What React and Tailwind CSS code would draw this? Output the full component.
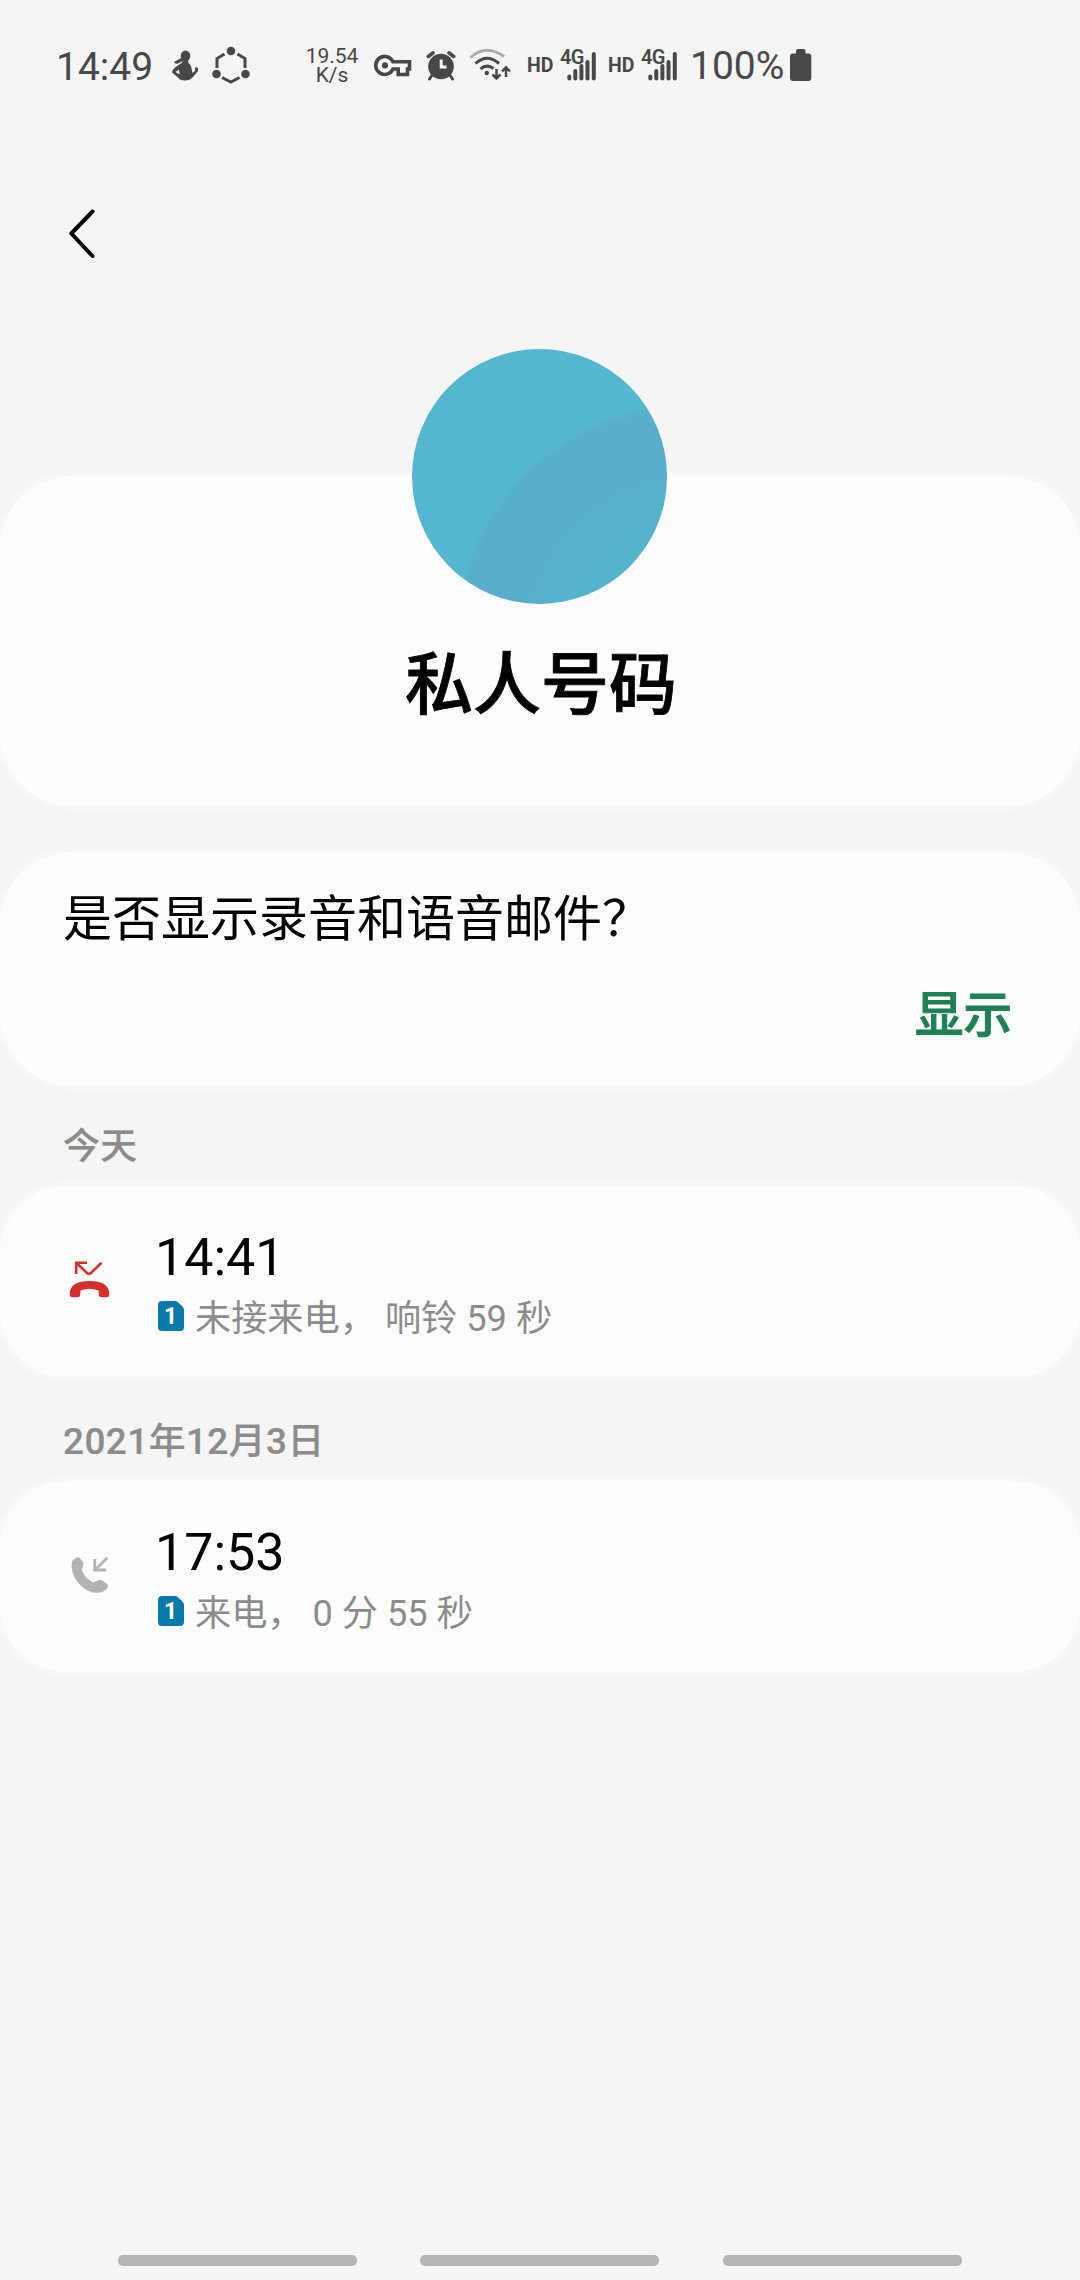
function StatusText({ className, children }) {
  return (
    <span className={`block shrink-0 whitespace-nowrap text-[39px] leading-10 ${className}`}>{children}</span>
  )
}

function FigureIcon() {
  return (
    <svg className="ml-[15px] h-10 w-7 shrink-0" viewBox="0 0 28 40" fill="#484848">
      <ellipse cx="14.5" cy="11" rx="4.8" ry="5.4" />
      <path d="M10 13 L12 16 L7 18.5 Q4 19.5 3 17 Z" />
      <path d="M11.5 14 H17 L17.5 18 Q20.5 20 20.8 25 L21.5 28 L24.3 25.5 L23.8 22.8 Q26 21.5 27 23.5 V26 L22 32 Q19 35.5 14 35.5 Q9 35.5 7.5 33 L1 27.5 Q1 25 4 22.5 L9 19 Q12 18 11.5 14 Z" />
      <path d="M4.5 27 L8 24.5 L8.5 29.5 Z" fill="#f5f5f5" />
    </svg>
  )
}

function HexagonIcon() {
  return (
    <svg className="ml-[12px] h-10 w-10 shrink-0" viewBox="0 0 40 40" fill="none" stroke="#484848" strokeWidth="3">
      <path d="M13.5 9 L6 13.5 V23 M26.5 9 L34 13.5 V23 M11 32.5 L20 37 L28.5 32.5" />
      <g fill="#484848" stroke="none">
        <circle cx="20" cy="6" r="4.3" />
        <circle cx="5.5" cy="29" r="4.3" />
        <circle cx="34.5" cy="29" r="4.3" />
      </g>
    </svg>
  )
}

function KeyIcon() {
  return (
    <svg className="ml-[14px] h-10 w-10 shrink-0" viewBox="0 0 40 40" fill="none" stroke="#484848" strokeWidth="3.6">
      <path d="M19 16.8 A9 9 0 1 0 19 24 H24.2 V29.5 H33.5 V24 H35.5 V16.8 Z" />
      <circle cx="11" cy="20.3" r="3.1" fill="#484848" stroke="none" />
    </svg>
  )
}

function AlarmIcon() {
  return (
    <svg className="ml-[12px] h-10 w-[30px] shrink-0" viewBox="0 0 30 40" fill="none" stroke="#484848" strokeLinecap="round">
      <circle cx="15" cy="21.5" r="12.8" fill="#484848" stroke="none" />
      <path d="M2.3 11.5 L7 7.8 M27.7 11.5 L23 7.8" strokeWidth="3.6" />
      <path d="M5.5 31 L3.5 34 M24.5 31 L26.5 34" strokeWidth="3" />
      <path d="M15.2 14.5 V22 H20.5" stroke="#f5f5f5" strokeWidth="3" strokeLinecap="butt" />
    </svg>
  )
}

function WifiIcon() {
  return (
    <svg className="ml-[13px] h-10 w-[42px] shrink-0" viewBox="0 0 42 40" fill="none" stroke="#484848" strokeWidth="3">
      <path d="M1.5 12.5 Q17 -1.5 35 11.5" stroke="#ababab" />
      <path d="M6.5 18.5 Q18 8 30 18.5 M11.5 24 Q18 18.5 24.5 23.5" />
      <circle cx="17.8" cy="28" r="2.2" fill="#484848" stroke="none" />
      <path d="M27.5 24 V33 M23.5 29.5 L27.5 33.5 L31.5 29.5 M37 32 V23 M33 26.5 L37 22.3 L41 26.5" strokeWidth="2.5" />
    </svg>
  )
}

function Signal({ className }) {
  return (
    <div className={`flex shrink-0 ${className}`}>
      <span className="w-[33px] pt-px text-[19.5px] leading-10 font-bold">HD</span>
      <svg className="h-10 w-[38px]" viewBox="0 0 38 40" fill="none" stroke="#484848" strokeWidth="4" strokeLinecap="round">
        <text x="0" y="19" fill="#484848" stroke="none" fontSize="20" fontWeight="600" letterSpacing="-.7">4G</text>
        <path d="M9.3 31.5 V33.5 M15.3 26 V33.5 M21.4 21 V33.5 M27.5 17 V33.5 M33.8 9 V33.5" />
      </svg>
    </div>
  )
}

function StatusBar() {
  return (
    <div className="flex h-[130px] items-start pt-[45px] pl-[56px] text-[#484848]">
      <StatusText className="w-[100px] pt-[2px]">14:49</StatusText>
      <FigureIcon />
      <HexagonIcon />
      <div className="ml-[53px] flex w-[56px] shrink-0 flex-col items-center pt-[2px] text-[21px] leading-[19px]">
        <span>19.54</span>
        <span>K/s</span>
      </div>
      <KeyIcon />
      <AlarmIcon />
      <WifiIcon />
      <Signal className="ml-[16px]" />
      <Signal className="ml-[10px]" />
      <StatusText className="ml-[11px] w-[100px] pt-px">100%</StatusText>
      <svg className="h-10 w-[22px] shrink-0" viewBox="0 0 22 40" fill="#484848">
        <rect x="6" y="4" width="9.5" height="8" rx="2" />
        <rect x="0" y="8.5" width="21.3" height="27.5" rx="3" />
      </svg>
    </div>
  )
}

function MissedIcon() {
  return (
    <svg className="h-10 w-11" viewBox="0 0 44 40" fill="none" stroke="#d3302f" strokeWidth="2.6">
      <path d="M7.2 14 V2.8 H18 M7.5 3 L17.5 12.5 Q20 15.2 22.5 12.5 L32.5 2.8" />
      <path d="M20.5 21 C8 21 0.5 25 .7 34.5 Q.7 37.3 3.5 37.3 H8.5 Q11 37.3 11.2 34.5 L11.5 30.5 Q20.5 27 29.5 30.5 L29.8 34.5 Q30 37.3 32.5 37.3 H37.5 Q40.3 37.3 40.3 34.5 C40.5 25 33 21 20.5 21 Z" fill="#d3302f" stroke="none" />
    </svg>
  )
}

function IncomingIcon() {
  return (
    <svg className="h-10 w-11" viewBox="0 0 44 40" fill="none" stroke="#b3b3b3" strokeWidth="2.8">
      <path d="M3.5 5.5 L7 2.8 Q9 1.4 11 3.3 L13.8 7 Q15 9 14 11.5 L12.8 15 Q16 24 24.5 27.5 L30 25 Q32 24.5 34 26 L38 29 Q40 31 38.5 33.3 Q34.5 37.8 28 37.8 C15 38 2 23 2.7 10 Q2.7 7 3.5 5.5 Z" fill="#b3b3b3" stroke="none" />
      <path d="M25.7 4 V15 H37 M26.5 14.5 L38.3 2.8" />
    </svg>
  )
}

function SimBadge() {
  return (
    <svg className="h-[30px] w-[26px] shrink-0" viewBox="0 0 26 30">
      <path d="M4 0 H17.5 Q19 0 20.5 1.8 L24.5 5.5 Q26 7 26 9 V26 Q26 30 22 30 H4 Q0 30 0 26 V4 Q0 0 4 0 Z" fill="#0879ad" />
      <text x="12.7" y="23.3" textAnchor="middle" fill="#fff" fontSize="23" fontWeight="700">1</text>
    </svg>
  )
}

const calls = [
  { label: '今天', time: '14:41', detail: '未接来电， 响铃 59 秒', icon: <MissedIcon /> },
  { label: '2021年12月3日', time: '17:53', detail: '来电， 0 分 55 秒', icon: <IncomingIcon /> }
]

function CallGroup({ call }) {
  return (
    <section className="h-[295px]">
      <h2 className="h-[100px] pt-[35px] pl-[63px] text-[36.8px] leading-[52px] font-medium tracking-[.5px] text-[#8c8c8c] [-webkit-text-stroke:.2px]">{call.label}</h2>
      <div className="flex h-[191px] rounded-[66px] bg-[#fdfdfd] pl-[69px] shadow-[0_0_10px_#fdfdfd]">
        <div className="w-[86px] shrink-0 pt-[74px]">{call.icon}</div>
        <div className="pt-[40px]">
          <div className="h-[64px] text-[52px] leading-[64px] text-black">{call.time}</div>
          <div className="mt-[2px] flex h-[48px] items-center pl-[3px] text-[#8c8c8c]">
            <SimBadge />
            <span className="ml-[11px] whitespace-pre pt-[6px] text-[36.2px] leading-[48px]">{call.detail}</span>
          </div>
        </div>
      </div>
    </section>
  )
}

export default function App() {
  return (
    <div className="flex h-[2280px] w-[1080px] flex-col overflow-hidden bg-[#f5f5f5] font-[Roboto,'Noto_Sans_CJK_SC',sans-serif]">
      <StatusBar />

      <header className="h-[219px] shrink-0 pt-[78px] pl-[67px]">
        <svg className="h-[52px] w-[30px]" viewBox="0 0 30 52" fill="none" stroke="#000" strokeWidth="4" strokeLinecap="round" strokeLinejoin="round">
          <path d="M25.5 3.5 L4.3 25.5 L25.5 48" />
        </svg>
      </header>

      {/* Contact */}
      <div className="mt-[127px] flex h-[330px] shrink-0 flex-col items-center rounded-[72px] bg-[#fdfdfd] shadow-[0_0_10px_#fdfdfd]">
        <div className="-mt-[127px] mr-px h-[255px] w-[255px] shrink-0 rounded-full bg-[radial-gradient(circle_at_110%_115%,#55b5cf_0,#56b3ce_120px,#58adcc_205px,#58afcc_233px,#55b7cf_241px)]" />
        <h1 className="mt-[33px] ml-[2px] text-[68px] leading-[98px] font-medium text-black [-webkit-text-stroke:.8px]">私人号码</h1>
      </div>

      {/* Recording prompt */}
      <div className="mt-[46px] flex h-[234px] shrink-0 flex-col rounded-[72px] bg-[#fdfdfd] pr-[64px] pl-[63px] pt-[32px] shadow-[0_0_10px_#fdfdfd]">
        <p className="text-[49px] leading-[72px] text-black">是否显示录音和语音邮件？</p>
        <button className="mt-[25px] mr-[4px] self-end text-[48.5px] leading-[70px] font-medium text-[#1f8153] [-webkit-text-stroke:1px]">显示</button>
      </div>

      {calls.map((call) => (
        <CallGroup key={call.label} call={call} />
      ))}

      {/* Gesture hints */}
      <div className="mt-auto flex justify-between pr-[118px] pb-[14px] pl-[118px]">
        <div className="h-[11px] w-[239px] rounded-[5px] bg-[#b5b5b5]" />
        <div className="mr-px h-[11px] w-[239px] rounded-[5px] bg-[#b5b5b5]" />
        <div className="h-[11px] w-[239px] rounded-[5px] bg-[#b5b5b5]" />
      </div>
    </div>
  )
}
